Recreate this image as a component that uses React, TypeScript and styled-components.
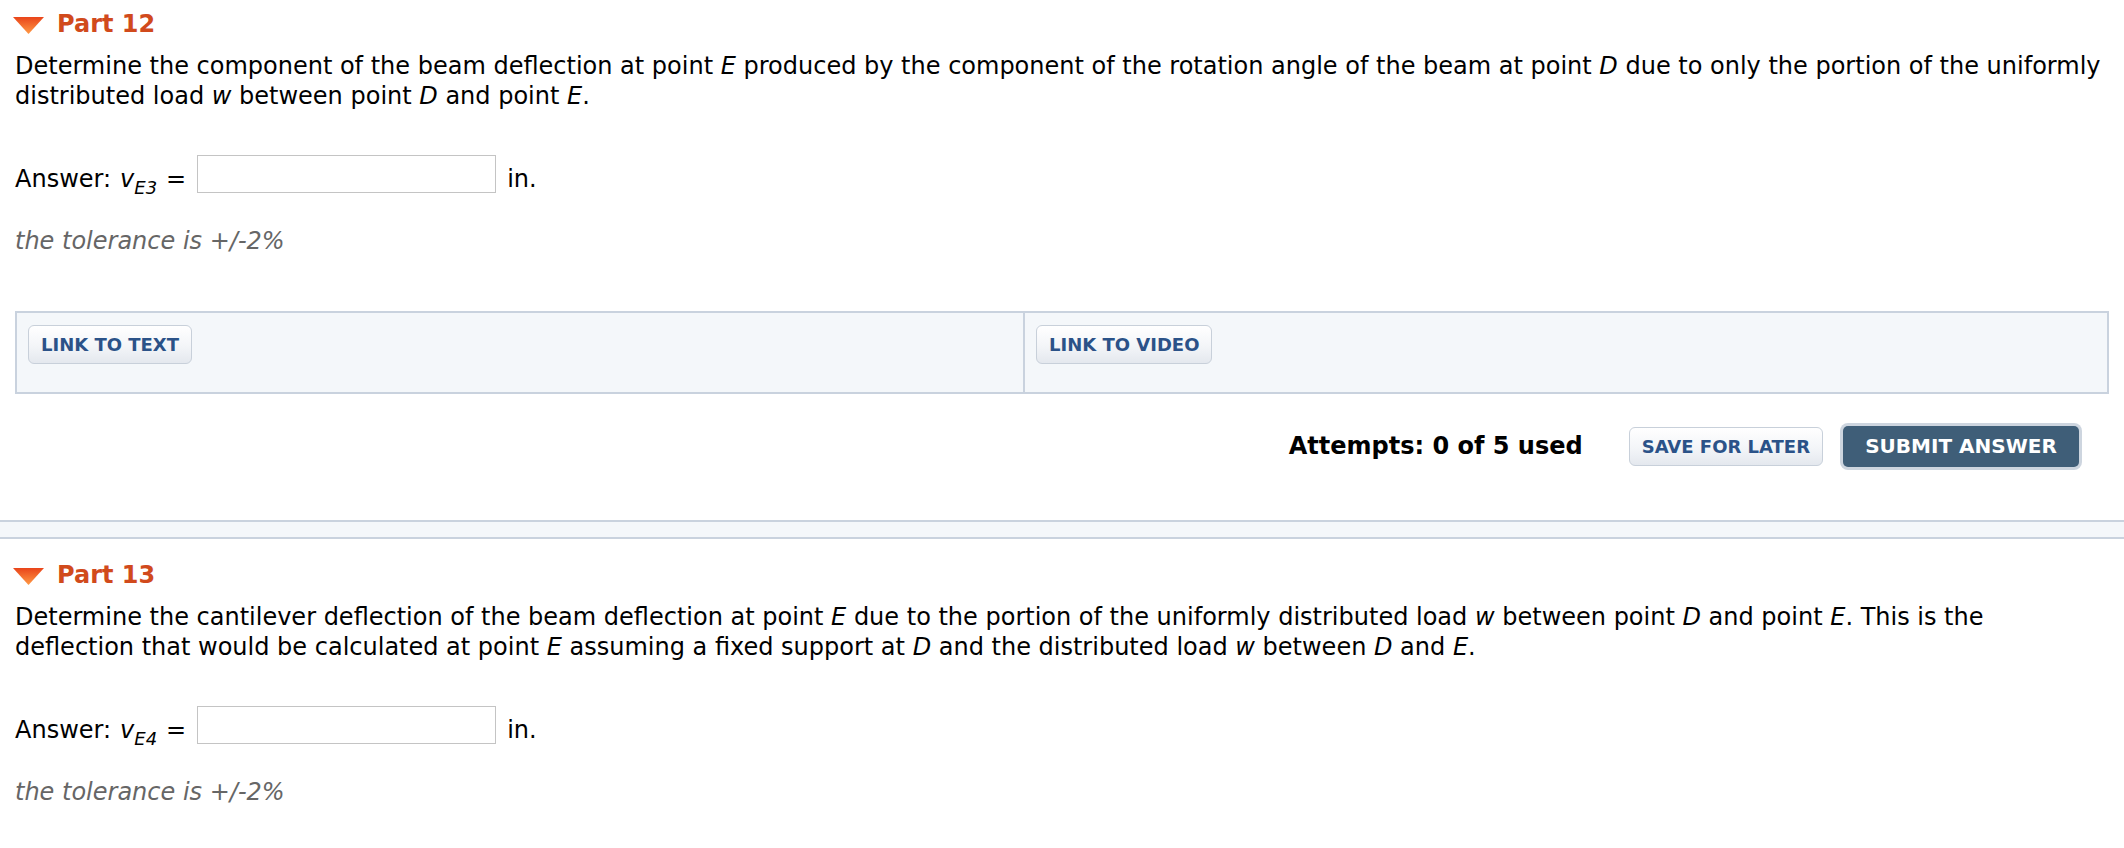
import React from "react";
import styled, { createGlobalStyle } from "styled-components";

const GlobalStyle = createGlobalStyle`
  html, body {
    margin: 0;
    padding: 0;
    background: #fff;
  }
  body {
    font-family: Verdana, "DejaVu Sans", sans-serif;
    color: #000;
  }
`;

const Page = styled.div`
  width: 2124px;
`;

const Part = styled.section`
  padding: 0 15px;
`;

const PartHeader = styled.div`
  display: flex;
  align-items: center;
  gap: 13px;
  height: 30px;
  padding-top: 9px;
`;

const Caret = styled.svg`
  width: 31px;
  height: 17px;
  margin-left: -2px;
  margin-top: 3px;
`;

const PartTitle = styled.h2`
  margin: 0;
  font-size: 24px;
  font-weight: bold;
  color: #d14a1c;
  line-height: 30px;
`;

const Prompt = styled.p`
  margin: 12px 0 0;
  font-size: 24px;
  line-height: 30px;
`;

const AnswerRow = styled.div`
  display: flex;
  align-items: flex-end;
  margin-top: 44px;
  font-size: 24px;
  height: 38px;
`;

const Label = styled.span`
  white-space: pre;
  line-height: 28px;
`;

const Var = styled.span`
  font-style: italic;
  line-height: 28px;
  margin: 0 9px 0 9px;

  sub {
    font-size: 18px;
    vertical-align: -7px;
    line-height: 0;
  }
`;

const AnswerInput = styled.input`
  box-sizing: border-box;
  width: 299px;
  height: 38px;
  margin: 0 11px 0 11px;
  border: 1px solid #c4c4c4;
  background: #fff;
  font-size: 20px;
`;

const Tolerance = styled.div`
  margin-top: 33px;
  font-size: 24px;
  font-style: italic;
  color: #666;
  line-height: 30px;
`;

const LinkPanel = styled.div`
  display: grid;
  grid-template-columns: 1006px 1fr;
  margin-top: 55px;
  border: 2px solid #c9d2de;
  background: #f4f7fa;
`;

const LinkCell = styled.div<{ $divider?: boolean }>`
  box-sizing: border-box;
  height: 79px;
  padding: 12px 12px 0 11px;
  border-left: ${(p) => (p.$divider ? "2px solid #c9d2de" : "none")};
`;

const LightButton = styled.button`
  box-sizing: border-box;
  height: 39px;
  padding: 0 12px;
  border: 1px solid #c8d0da;
  border-radius: 6px;
  background: linear-gradient(to bottom, #ffffff 0%, #f3f5f8 55%, #e4e8ee 100%);
  color: #2b5288;
  font-family: Verdana, "DejaVu Sans", sans-serif;
  font-size: 18px;
  font-weight: bold;
  cursor: pointer;
`;

const ActionRow = styled.div`
  display: flex;
  justify-content: flex-end;
  align-items: center;
  gap: 20px;
  margin-top: 28px;
  padding-right: 30px;
  height: 48px;
`;

const Attempts = styled.div`
  font-size: 24px;
  font-weight: bold;
  margin-right: 26px;
`;

const SubmitButton = styled.button`
  box-sizing: border-box;
  height: 41px;
  width: 236px;
  border: none;
  border-radius: 5px;
  background: #3f5e78;
  box-shadow: 0 0 0 3px #cdd5df;
  color: #fff;
  font-family: Verdana, "DejaVu Sans", sans-serif;
  font-size: 20px;
  font-weight: bold;
  cursor: pointer;
`;

const Separator = styled.div`
  margin: 50px 0 12px;
  height: 15px;
  border-top: 2px solid #c9d2de;
  border-bottom: 2px solid #c9d2de;
  background: #f4f7fa;
`;

const CaretIcon = ({ id }: { id: string }) => (
  <Caret viewBox="0 0 31 17">
    <defs>
      <linearGradient id={id} x1="0" y1="0" x2="0" y2="1">
        <stop offset="0" stopColor="#e9441a" />
        <stop offset="1" stopColor="#ff9a45" />
      </linearGradient>
    </defs>
    <polygon points="0,0 31,0 15.5,17" fill={`url(#${id})`} />
  </Caret>
);

const PartBlock = ({
  id,
  title,
  children,
  sub,
  tail,
}: {
  id: string;
  title: string;
  children: React.ReactNode;
  sub: string;
  tail?: React.ReactNode;
}) => (
  <Part>
    <PartHeader>
      <CaretIcon id={id} />
      <PartTitle>{title}</PartTitle>
    </PartHeader>
    <Prompt>{children}</Prompt>
    <AnswerRow>
      <Label>Answer:</Label>
      <Var>
        v<sub>{sub}</sub>
      </Var>
      <Label>=</Label>
      <AnswerInput type="text" />
      <Label>in.</Label>
    </AnswerRow>
    <Tolerance>the tolerance is +/-2%</Tolerance>
    {tail}
  </Part>
);

export default function App() {
  return (
    <Page>
      <GlobalStyle />
      <PartBlock
        id="caret12"
        title="Part 12"
        sub="E3"
        tail={
          <>
            <LinkPanel>
              <LinkCell>
                <LightButton>LINK TO TEXT</LightButton>
              </LinkCell>
              <LinkCell $divider>
                <LightButton>LINK TO VIDEO</LightButton>
              </LinkCell>
            </LinkPanel>
            <ActionRow>
              <Attempts>Attempts: 0 of 5 used</Attempts>
              <LightButton>SAVE FOR LATER</LightButton>
              <SubmitButton>SUBMIT ANSWER</SubmitButton>
            </ActionRow>
          </>
        }
      >
        Determine the component of the beam deflection at point <i>E</i>{" "}
        produced by the component of the rotation angle of the beam at point{" "}
        <i>D</i> due to only the portion of the uniformly distributed load{" "}
        <i>w</i> between point <i>D</i> and point <i>E</i>.
      </PartBlock>
      <Separator />
      <PartBlock id="caret13" title="Part 13" sub="E4">
        Determine the cantilever deflection of the beam deflection at point{" "}
        <i>E</i> due to the portion of the uniformly distributed load <i>w</i>{" "}
        between point <i>D</i> and point <i>E</i>. This is the deflection that
        would be calculated at point <i>E</i> assuming a fixed support at{" "}
        <i>D</i> and the distributed load <i>w</i> between <i>D</i> and{" "}
        <i>E</i>.
      </PartBlock>
    </Page>
  );
}
